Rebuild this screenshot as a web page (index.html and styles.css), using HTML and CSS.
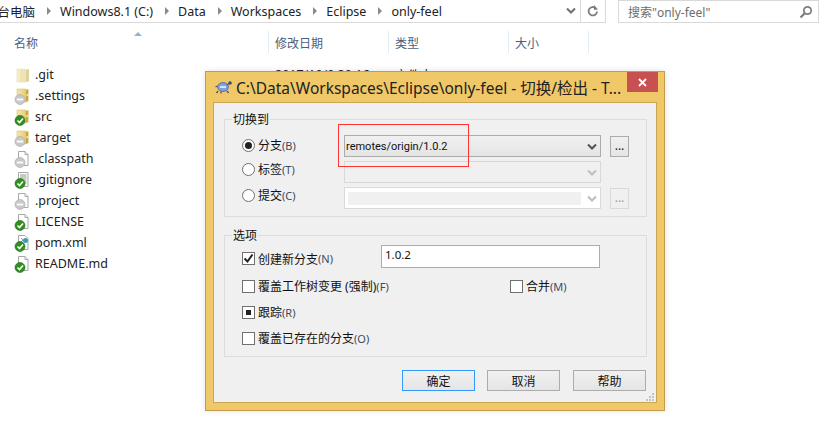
FILE: index.html
```html
<!DOCTYPE html>
<html lang="zh-CN">
<head>
<meta charset="utf-8">
<title>only-feel</title>
<link rel="stylesheet" href="styles.css">
</head>
<body>
<svg class="defs" width="0" height="0" aria-hidden="true">
  <defs>
    <linearGradient id="fy" x1="0" x2="1" y1="0" y2="0"><stop offset="0" stop-color="#f6e6a8"/><stop offset="1" stop-color="#e9cd72"/></linearGradient>
    <symbol id="folder" viewBox="0 0 18 18">
      <path d="M3 2h9v13H3z" fill="url(#fy)" stroke="#d8c179" stroke-width=".6"/>
      <path d="M12 3l2.400-1v12L12 15z" fill="#c9a63e"/>
      <path d="M12.600 7h1.200v2h-1.200z" fill="#fff6c8"/>
    </symbol>
    <symbol id="folder-pale" viewBox="0 0 18 18">
      <path d="M3 3h9v13H3z" fill="#f5eccb" stroke="#e6dcb4" stroke-width=".6"/>
      <path d="M6 4h7l2-1v12l-2 1H6z" fill="#efe3b5"/>
      <path d="M12 4l3-1v12l-3 1z" fill="#e0d09a"/>
    </symbol>
    <symbol id="file" viewBox="0 0 18 18">
      <path d="M4.500 1.500h6.500l3 3v11h-9.500z" fill="#fff" stroke="#a8a8a8"/>
      <path d="M11 1.500v3h3" fill="#eee" stroke="#a8a8a8"/>
    </symbol>
    <symbol id="file-lines" viewBox="0 0 18 18">
      <path d="M4.500 1.500h9.500v14h-9.500z" fill="#fff" stroke="#a8a8a8"/>
      <path d="M6 4h6.500M6 6h6.500M6 8h6.500M6 10h6.500M6 12h6.500" stroke="#8a9a7a"/>
    </symbol>
    <symbol id="file-xml" viewBox="0 0 18 18">
      <path d="M4.500 1.500h6.500l3 3v11h-9.500z" fill="#fff" stroke="#a8a8a8"/>
      <circle cx="11.500" cy="6.500" r="2.500" fill="#3a9ab8"/>
      <path d="M7 4l2 2-2 2" fill="none" stroke="#7a9ab0"/>
    </symbol>
    <symbol id="ok" viewBox="0 0 18 18">
      <circle cx="6" cy="12.500" r="5" fill="#2f8f1f" stroke="#1d6a12" stroke-width=".6"/>
      <path d="M3.500 12.500l2 2 3.500-4" fill="none" stroke="#fff" stroke-width="1.600"/>
    </symbol>
    <symbol id="no" viewBox="0 0 18 18">
      <circle cx="6" cy="12.500" r="5" fill="#c9c9c9" stroke="#a6a6a6" stroke-width=".6"/>
      <path d="M2.800 12.500h6.400" stroke="#fff" stroke-width="1.800"/>
    </symbol>
    <symbol id="chev" viewBox="0 0 10 8">
      <path d="M1 1.500l4 4 4-4" fill="none" stroke="currentColor" stroke-width="2"/>
    </symbol>
  </defs>
</svg>

<div class="explorer">
  <header class="topbar">
    <nav class="address">
      <span class="crumb crumb-first">台电脑</span><i class="sep"></i>
      <span class="crumb">Windows8.1 (C:)</span><i class="sep"></i>
      <span class="crumb">Data</span><i class="sep"></i>
      <span class="crumb">Workspaces</span><i class="sep"></i>
      <span class="crumb">Eclipse</span><i class="sep"></i>
      <span class="crumb">only-feel</span>
      <svg class="addr-chev"><use href="#chev"/></svg>
      <span class="refresh">
        <svg width="14" height="14" viewBox="0 0 14 14"><path d="M11 7.500a4.200 4.200 0 1 1-1.500-3.500" fill="none" stroke="#7d7d7d" stroke-width="1.800"/><path d="M8 1v5l4-.5z" fill="#7d7d7d"/></svg>
      </span>
    </nav>
    <div class="search">
      <span>搜索"only-feel"</span>
      <svg width="14" height="14" viewBox="0 0 14 14"><circle cx="8.500" cy="5.500" r="3.700" fill="none" stroke="#7d7d7d" stroke-width="1.800"/><path d="M5.800 8.200L1.500 12.500" stroke="#7d7d7d" stroke-width="2.200"/></svg>
    </div>
  </header>

  <div class="columns">
    <div class="col col-name">名称<svg class="sort" width="8" height="4" viewBox="0 0 8 4"><path d="M4 0l4 4H0z" fill="#8fb4cf"/></svg></div>
    <div class="col">修改日期</div>
    <div class="col">类型</div>
    <div class="col col-end">大小</div>
  </div>

  <ul class="files">
    <li class="file"><span class="ic"><svg><use href="#folder-pale"/></svg></span><span class="fname">.git</span><span class="fdate">2017/10/9 20:16</span><span class="ftype">文件夹</span></li>
    <li class="file"><span class="ic"><svg><use href="#folder"/></svg><svg><use href="#no"/></svg></span><span class="fname">.settings</span></li>
    <li class="file"><span class="ic"><svg><use href="#folder"/></svg><svg><use href="#ok"/></svg></span><span class="fname">src</span></li>
    <li class="file"><span class="ic"><svg><use href="#folder"/></svg><svg><use href="#no"/></svg></span><span class="fname">target</span></li>
    <li class="file"><span class="ic"><svg><use href="#file"/></svg><svg><use href="#no"/></svg></span><span class="fname">.classpath</span></li>
    <li class="file"><span class="ic"><svg><use href="#file-lines"/></svg><svg><use href="#ok"/></svg></span><span class="fname">.gitignore</span></li>
    <li class="file"><span class="ic"><svg><use href="#file"/></svg><svg><use href="#no"/></svg></span><span class="fname">.project</span></li>
    <li class="file"><span class="ic"><svg><use href="#file"/></svg><svg><use href="#ok"/></svg></span><span class="fname">LICENSE</span></li>
    <li class="file"><span class="ic"><svg><use href="#file-xml"/></svg><svg><use href="#ok"/></svg></span><span class="fname">pom.xml</span></li>
    <li class="file"><span class="ic"><svg><use href="#file"/></svg><svg><use href="#ok"/></svg></span><span class="fname">README.md</span></li>
  </ul>
</div>

<section class="dialog">
  <div class="titlebar">
    <svg class="turtle" width="18" height="16" viewBox="0 0 18 16">
      <ellipse cx="8" cy="8" rx="5.500" ry="4.500" fill="#7f9fe0" stroke="#4a5f8f" stroke-width=".7"/>
      <circle cx="15" cy="4" r="1.800" fill="#34506f"/>
      <path d="M12 6l2-1.500M3 12l-1.500 2M12 12l1.500 2M6 12.500v2M2.500 7L.5 8" stroke="#555" stroke-width="1.300"/>
      <path d="M5 7h6v2H5z" fill="#d8e2f6"/>
    </svg>
    <span class="title">C:\Data\Workspaces\Eclipse\only-feel - 切换/检出 - T...</span>
    <button class="close" aria-label="关闭"><svg width="9" height="9" viewBox="0 0 9 9"><path d="M1 1l7 7M8 1L1 8" stroke="#fff" stroke-width="1.800"/></svg></button>
  </div>
  <div class="client">
    <div class="group group-switch">
      <span class="legend">切换到</span>
      <div class="switch-grid">
        <label class="opt opt-first"><i class="radio radio-on"></i>分支<em>(B)</em></label>
        <div class="combo combo-on"><span>remotes/origin/1.0.2</span><svg class="cv"><use href="#chev"/></svg></div>
        <button class="more">...</button>
        <label class="opt opt-next"><i class="radio"></i>标签<em>(T)</em></label>
        <div class="combo combo-off"><span></span><svg class="cv"><use href="#chev"/></svg></div>
        <span></span>
        <label class="opt opt-next"><i class="radio"></i>提交<em>(C)</em></label>
        <div class="combo combo-edit"><span class="combo-fill"></span><svg class="cv"><use href="#chev"/></svg></div>
        <button class="more more-off">...</button>
      </div>
    </div>

    <div class="group group-options">
      <span class="legend">选项</span>
      <div class="opt-row opt-row-first">
        <label class="opt"><i class="check"><svg width="11" height="11" viewBox="0 0 11 11"><path d="M1.500 5.500l3 3 5-7" fill="none" stroke="#222" stroke-width="2"/></svg></i>创建新分支<em>(N)</em></label>
        <input class="text" type="text" value="1.0.2">
      </div>
      <div class="opt-row">
        <label class="opt"><i class="check"></i>覆盖工作树变更 (强制)<em>(F)</em></label>
        <label class="opt opt-merge"><i class="check"></i>合并<em>(M)</em></label>
      </div>
      <div class="opt-row">
        <label class="opt"><i class="check check-mixed"></i>跟踪<em>(R)</em></label>
      </div>
      <div class="opt-row">
        <label class="opt"><i class="check"></i>覆盖已存在的分支<em>(O)</em></label>
      </div>
    </div>

    <div class="actions">
      <button class="btn btn-default">确定</button>
      <button class="btn">取消</button>
      <button class="btn">帮助</button>
    </div>
    <svg class="grip" width="9" height="9" viewBox="0 0 9 9"><path d="M6 0h2v2H6zM3 3h2v2H3zM6 3h2v2H6zM0 6h2v2H0zM3 6h2v2H3zM6 6h2v2H6z" fill="#c4c4c4"/></svg>
  </div>
  <div class="highlight"></div>
</section>
</body>
</html>
```
FILE: styles.css
```css
* { box-sizing: border-box; }
html, body { margin: 0; height: 100%; }
body {
  position: relative;
  overflow: hidden;
  width: 827px;
  height: 431px;
  background: #fff;
  color: #1e1e1e;
  font-family: "Noto Sans", "Noto Sans CJK SC", sans-serif;
  font-size: 12px;
}
.defs { position: absolute; }

/* Explorer */
.topbar { display: flex; height: 23px; }
.address {
  display: flex;
  align-items: center;
  width: 606px;
  border-right: 1px solid #d9d9d9;
  border-bottom: 1px solid #d9d9d9;
  font-size: 12.500px;
  color: #222;
}
.crumb { white-space: nowrap; }
.crumb-first { margin-left: -2.500px; }
.sep {
  width: 0; height: 0;
  margin: 0 9px 0 12px;
  border-left: 4px solid #8a8a8a;
  border-top: 4px solid transparent;
  border-bottom: 4px solid transparent;
}
.addr-chev { width: 10px; height: 8px; margin-left: auto; margin-right: 4px; color: #707070; }
.refresh {
  display: flex; align-items: center; justify-content: center;
  width: 25px; height: 22px;
  border-left: 1px solid #d9d9d9;
}
.search {
  display: flex;
  align-items: center;
  justify-content: space-between;
  width: 201px;
  margin-left: 12px;
  padding: 0 5px 0 9px;
  border: 1px solid #d9d9d9;
  font-size: 12px;
  color: #6d6d6d;
}

.columns {
  display: grid;
  grid-template-columns: 268px 120px 120px 81px;
  margin: 8px 0 11px;
  width: 589px;
  height: 22px;
  color: #4c607a;
  font-size: 12px;
}
.col {
  position: relative;
  display: flex;
  align-items: center;
  padding-left: 6px;
  padding-top: 2px;
  border-left: 1px solid #e3ebf3;
}
.col-name { padding-left: 14px; border-left: 0; }
.col-end { border-right: 1px solid #e3ebf3; }
.sort { position: absolute; left: 134px; top: 1px; }

.files { list-style: none; margin: 0; padding: 0; }
.file {
  display: flex;
  align-items: center;
  height: 21px;
  padding-left: 14px;
  font-size: 12.500px;
  color: #222;
}
.ic { position: relative; display: block; width: 18px; height: 18px; margin-right: 3px; }
.ic svg { position: absolute; left: 0; top: 0; width: 18px; height: 18px; }
.fname { width: 240px; }
.fdate { width: 120px; }

/* Dialog window */
.dialog {
  position: absolute;
  left: 205px;
  top: 71px;
  width: 460px;
  height: 340px;
  display: flex;
  flex-direction: column;
  padding: 0 7px 7px;
  background: #f0c868;
  border: 1px solid #c49b4a;
  box-shadow: 0 0 6px rgba(0, 0, 0, .12);
}
.titlebar { display: flex; align-items: center; flex: 0 0 30px; padding-left: 2px; }
.turtle { margin-right: 3px; }
.title { font-size: 15.500px; color: #222; white-space: nowrap; }
.close {
  position: absolute;
  right: 6px;
  top: 0;
  display: flex; align-items: center; justify-content: center;
  width: 31px; height: 20px;
  padding: 0;
  border: 0;
  background: #c75050;
}
.client {
  position: relative;
  flex: 1;
  padding: 16px 9px 0 10px;
  background: #f0f0f0;
  border: 1px solid #c9a656;
}
.group {
  border: 1px solid #dcdcdc;
  padding-left: 17px;
}
.group-switch { height: 98px; }
.group-options { height: 122px; margin-top: 18px; }
.legend {
  display: block;
  width: fit-content;
  height: 16px;
  line-height: 16px;
  margin: -8px 0 7px -10px;
  padding: 0 1px;
  background: #f0f0f0;
  font-size: 12px;
  color: #111;
}
.group-options .legend { margin-bottom: 0; }

.switch-grid {
  display: grid;
  grid-template-columns: 93px 257px 19px;
  grid-auto-rows: 22px;
  column-gap: 9px;
  row-gap: 4px;
  align-items: center;
}
.opt {
  display: flex;
  align-items: center;
  font-size: 12px;
  color: #111;
  white-space: nowrap;
}
.opt em { font-style: normal; color: #3b4a5e; font-size: 11px; }
.opt-first { margin-bottom: 2px; }
.opt-next { margin-bottom: 6px; }
.radio {
  display: flex; align-items: center; justify-content: center;
  width: 13px; height: 13px;
  margin-right: 3px;
  border: 1px solid #707070;
  border-radius: 50%;
  background: #fff;
}
.radio-on::after {
  content: "";
  width: 7px; height: 7px;
  border-radius: 50%;
  background: #222;
}
.combo {
  position: relative;
  display: flex;
  align-items: center;
  height: 22px;
  padding-left: 1px;
  border: 1px solid #acacac;
  font-family: Roboto, sans-serif;
  font-size: 11px;
  color: #111;
}
.combo-on { background: linear-gradient(#f0f0f0, #e5e5e5); }
.combo-off { background: #f0f0f0; border-color: #d9d9d9; }
.combo-edit { background: #fff; border-color: #d9d9d9; padding-left: 3px; }
.combo-fill { display: block; width: 233px; height: 13px; background: #f0f0f0; }
.cv {
  position: absolute;
  right: 3px; top: 7px;
  width: 10px; height: 8px;
  color: #505050;
}
.combo-off .cv, .combo-edit .cv { color: #bdbdbd; }
.more {
  height: 21px;
  padding: 0 0 4px;
  border: 1px solid #acacac;
  background: linear-gradient(#f0f0f0, #e5e5e5);
  font: 12px "Noto Sans", sans-serif;
  color: #111;
}
.more-off { border-color: #d9d9d9; background: #f0f0f0; color: #9a9a9a; }

.opt-row { display: flex; align-items: center; height: 26px; }
.opt-row-first { height: 29px; }
.check {
  display: flex; align-items: center; justify-content: center;
  width: 13px; height: 13px;
  margin-right: 3px;
  border: 1px solid #707070;
  background: #fff;
}
.check-mixed::after { content: ""; width: 5px; height: 5px; background: #222; }
.text {
  position: absolute;
  left: 167px;
  top: 142px;
  width: 219px;
  height: 23px;
  padding: 0 0 4px 3px;
  border: 1px solid #acacac;
  background: #fff;
  font: 11.500px "Noto Sans", sans-serif;
  color: #111;
}
.opt-merge { position: absolute; left: 296px; }

.actions { display: flex; justify-content: flex-end; gap: 13px; margin-top: 13px; padding-right: 1px; }
.btn {
  width: 73px;
  height: 21px;
  padding: 0;
  border: 1px solid #acacac;
  background: linear-gradient(#f0f0f0, #e5e5e5);
  font: 12px "Noto Sans CJK SC", sans-serif;
  color: #111;
}
.btn-default { border-color: #3399ff; margin-right: -1px; }
.grip { position: absolute; right: 1px; bottom: 0; }
.highlight {
  position: absolute;
  left: 132px;
  top: 52px;
  width: 131px;
  height: 43px;
  border: 1px solid #f33;
}
```
